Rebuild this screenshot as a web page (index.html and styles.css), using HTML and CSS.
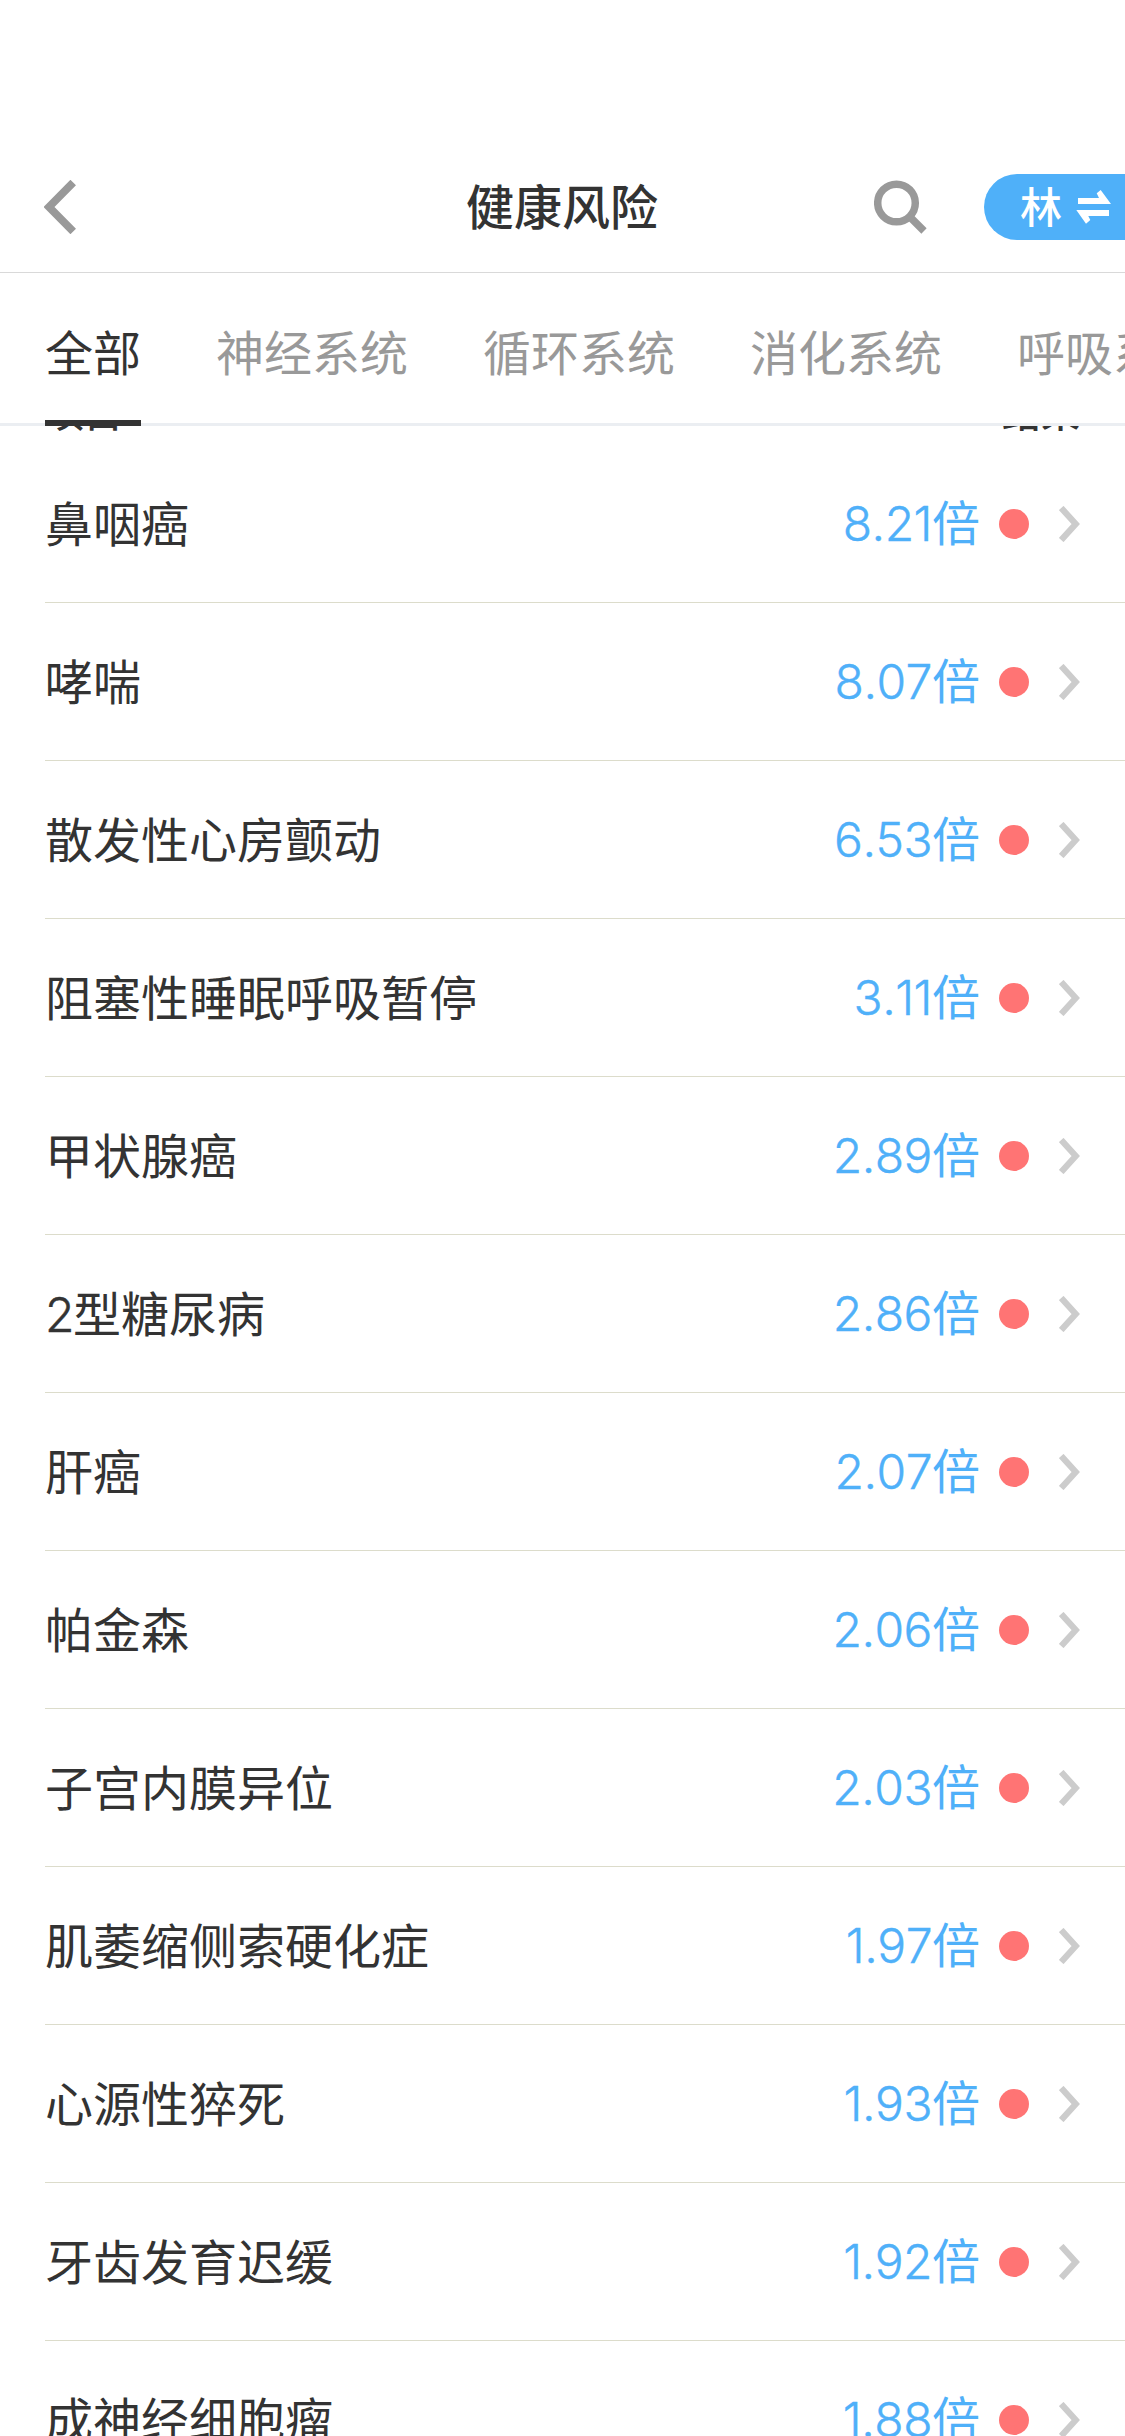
FILE: index.html
```html
<!DOCTYPE html>
<html lang="zh-CN">
<head>
<meta charset="utf-8">
<title>健康风险</title>
<link rel="stylesheet" href="styles.css">
</head>
<body>
<header class="navbar">
  <svg class="back" viewBox="0 0 32 54"><path d="M29.2 2.5 5 27 29.2 51.5"/></svg>
  <h1 class="title">健康风险</h1>
  <div class="actions">
    <svg class="search" viewBox="0 0 54 54"><circle cx="22.5" cy="23" r="18.8"/><path d="M35 36 50 51"/></svg>
    <div class="switch"><span class="person">林</span>
      <svg class="swap" viewBox="0 0 36 36"><path d="M2 9H23L20.7 4.3 24.7 1 35 15H2ZM.3 21H33V27H12.3L14.3 31 10 34.7Z"/></svg>
    </div>
  </div>
</header>
<nav class="tabs">
  <a class="tab active">全部</a><a class="tab">神经系统</a><a class="tab">循环系统</a><a class="tab">消化系统</a><a class="tab">呼吸系统</a>
</nav>
<main>
  <div class="list-head"><span>项目</span><span>结果</span></div>
  <ul class="list" id="list"></ul>
</main>
<script src="app.js"></script>
</body>
</html>
```
FILE: styles.css
```css
* { box-sizing: border-box; }
body {
  margin: 0;
  height: 2436px;
  overflow: hidden;
  background: #fff;
  color: #333;
  font-family: "Noto Sans CJK SC", sans-serif;
  font-size: 48px;
  display: flex;
  flex-direction: column;
}
svg { display: block; flex: none; }
.navbar {
  flex: none;
  height: 273px;
  padding: 142px 0 0 44px;
  border-bottom: 1px solid #d9d9d9;
  display: grid;
  grid-template-columns: 422px 192px 1fr;
  align-items: center;
}
.back { width: 32px; height: 54px; fill: none; stroke: #999; stroke-width: 7.8; }
.title { margin: 0; padding-bottom: 6px; font-size: 48px; line-height: 66px; font-weight: 500; white-space: nowrap; }
.actions { display: flex; align-items: center; justify-content: flex-end; gap: 56px; }
.search { width: 54px; height: 54px; fill: none; stroke: #999; stroke-width: 7.5; }
.switch {
  flex: none;
  width: 141px;
  height: 66px;
  padding-left: 36px;
  border-radius: 33px 0 0 33px;
  background: #4fb0f9;
  color: #fff;
  font-size: 42px;
  display: flex;
  align-items: center;
  gap: 14px;
}
.person { line-height: 60px; padding-bottom: 4px; font-weight: 500; }
.swap { width: 36px; height: 36px; fill: #fff; }
.tabs {
  flex: none;
  height: 153px;
  padding-left: 45px;
  border-bottom: 3px solid #ebeef2;
  display: flex;
  gap: 75px;
  color: #999;
  white-space: nowrap;
  overflow-x: clip;
}
.tab { flex: none; height: 153px; line-height: 154px; }
.active { color: #333; border-bottom: 6px solid #333; }
main { flex: 1; min-height: 0; overflow: hidden; }
.list-head {
  height: 19px;
  padding: 0 45px 6px;
  display: flex;
  justify-content: space-between;
  align-items: flex-end;
  overflow: hidden;
  font-size: 39px;
  line-height: 58px;
  font-weight: 500;
}
.list { margin: 0; padding: 0 0 0 45px; list-style: none; }
.row {
  height: 158px;
  padding: 1px 45px 0 0;
  border-bottom: 1px solid #dcdccb;
  display: flex;
  align-items: center;
}
.name { flex: 1; line-height: 72px; padding-bottom: 7px; }
.digit-prefix, .value {
  font-family: "Inter", "Noto Sans CJK SC", sans-serif;
  font-weight: 300;
  font-kerning: none;
  letter-spacing: -0.5px;
  -webkit-text-stroke: 0.4px;
}
.digit-prefix { line-height: 1; letter-spacing: -1.5px; }
.value { color: #4fb0f9; display: flex; align-items: baseline; line-height: 72px; padding-bottom: 4px; }
.unit { font-family: "Noto Sans CJK SC", sans-serif; font-weight: 400; letter-spacing: 0; -webkit-text-stroke: 0; }
.dot { width: 30px; height: 30px; margin: 0 30px 0 19px; border-radius: 50%; background: #ff7474; }
.chevron { width: 21px; height: 36px; fill: none; stroke: #ccc; stroke-width: 6.3; }
```
FILE: app.js
```js
const risks = [
  ["鼻咽癌", "8.21"], ["哮喘", "8.07"], ["散发性心房颤动", "6.53"],
  ["阻塞性睡眠呼吸暂停", "3.11"], ["甲状腺癌", "2.89"], ["2型糖尿病", "2.86"],
  ["肝癌", "2.07"], ["帕金森", "2.06"], ["子宫内膜异位", "2.03"],
  ["肌萎缩侧索硬化症", "1.97"], ["心源性猝死", "1.93"], ["牙齿发育迟缓", "1.92"],
  ["成神经细胞瘤", "1.88"]
];
document.getElementById("list").innerHTML = risks.map(([name, times]) => `
  <li class="row">
    <span class="name">${name.replace(/^\d/, '<span class="digit-prefix">$&</span>')}</span>
    <span class="value">${times}<span class="unit">倍</span></span>
    <i class="dot"></i>
    <svg class="chevron" viewBox="0 0 21 36"><path d="M2.2 2 16.7 18 2.2 34"/></svg>
  </li>`).join("");
```
